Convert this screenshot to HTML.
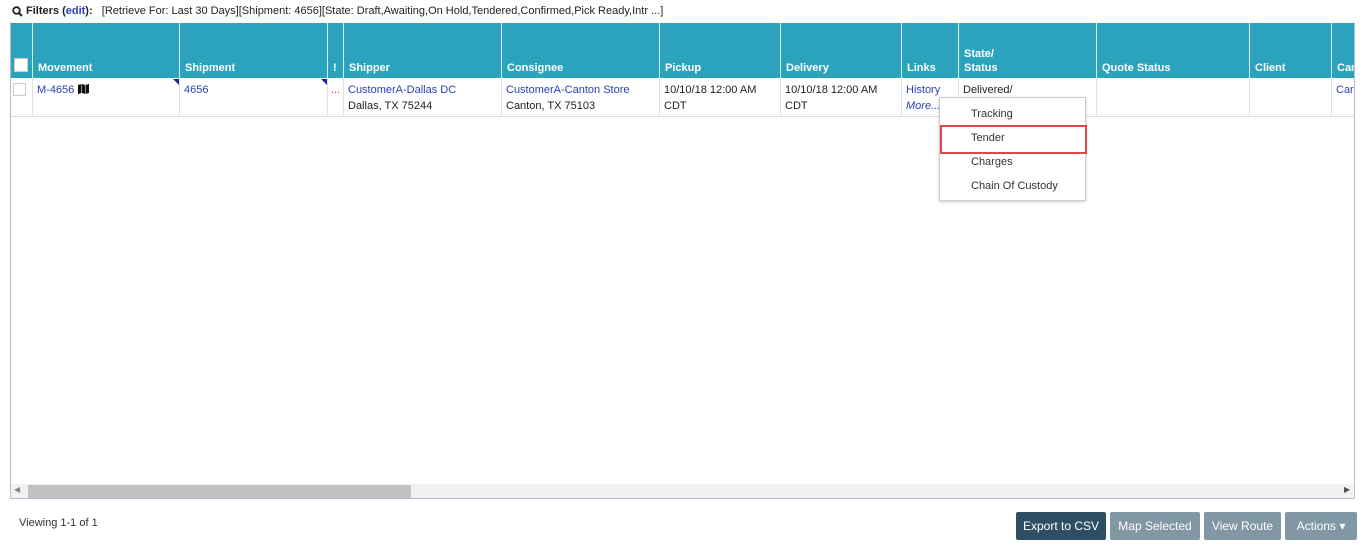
<!DOCTYPE html>
<html><head><meta charset="utf-8"><style>
body{margin:0;width:1366px;height:546px;background:#fff;font-family:"Liberation Sans",sans-serif;font-size:11px;color:#222;position:relative;overflow:hidden}
.a{position:absolute;white-space:nowrap}
.h{position:absolute;top:23px;height:55px;background:#2ca3bd;border-left:1px solid #d9eef3}
.ht{position:absolute;bottom:3px;left:5px;color:#fff;font-weight:bold;font-size:11px;line-height:14px}
.c{position:absolute;top:78px;height:38px;border-left:1px solid #e2e2e2;border-bottom:1px solid #ddd}
.ct{position:absolute;top:4px;left:4px;line-height:16px;white-space:nowrap}
.lk{color:#2a3fb8}
.btn{position:absolute;top:512px;height:28px;color:#fff;font-size:12px;line-height:28px;text-align:center;border-radius:2px;background:#8197a4}
.mi{position:absolute;left:31px;font-size:11px;color:#333}
</style></head><body>
<svg class="a" style="left:12px;top:6px" width="11" height="11" viewBox="0 0 11 11"><circle cx="4.5" cy="4.5" r="3.3" fill="none" stroke="#222" stroke-width="1.8"/><path d="M7 7L10 10" stroke="#222" stroke-width="2"/></svg>
<div class="a" style="left:26px;top:5px;font-size:11px"><b>Filters (<span class="lk">edit</span>):</b>&nbsp;&nbsp; [Retrieve For: Last 30 Days][Shipment: 4656][State: Draft,Awaiting,On Hold,Tendered,Confirmed,Pick Ready,Intr ...]</div>
<div class="a" style="left:10px;top:22px;width:1343px;height:476px;border:1px solid #b8b8d0;border-top:none"></div>
<div class="h" style="left:11px;width:21px;border-left:none"><div style="position:absolute;left:3px;bottom:6px;width:12px;height:12px;background:#fff;border:1px solid #ccc"></div></div>
<div class="h" style="left:32px;width:147px"><div class="ht">Movement</div></div>
<div class="h" style="left:179px;width:148px"><div class="ht">Shipment</div></div>
<div class="h" style="left:327px;width:16px"><div class="ht">!</div></div>
<div class="h" style="left:343px;width:158px"><div class="ht">Shipper</div></div>
<div class="h" style="left:501px;width:158px"><div class="ht">Consignee</div></div>
<div class="h" style="left:659px;width:121px"><div class="ht">Pickup</div></div>
<div class="h" style="left:780px;width:121px"><div class="ht">Delivery</div></div>
<div class="h" style="left:901px;width:57px"><div class="ht">Links</div></div>
<div class="h" style="left:958px;width:138px"><div class="ht">State/<br>Status</div></div>
<div class="h" style="left:1096px;width:153px"><div class="ht">Quote Status</div></div>
<div class="h" style="left:1249px;width:82px"><div class="ht">Client</div></div>
<div class="h" style="left:1331px;width:22px;overflow:hidden"><div class="ht">Car</div></div>

<div class="c" style="left:11px;width:21px;border-left:none"><div style="position:absolute;left:2px;top:5px;width:11px;height:11px;border:1px solid #ccc"></div></div>
<div class="c" style="left:32px;width:147px"><div class="ct"><span class="lk">M-4656</span></div><svg style="position:absolute;left:45px;top:6px" width="11" height="10" viewBox="0 0 11 10"><path d="M0 1L3.5 0V9L0 10ZM4 0L7 1V10L4 9ZM7.5 1L11 0V9L7.5 10Z" fill="#111"/></svg><div style="position:absolute;right:1px;top:1px;border-top:6px solid #1a2a9a;border-left:6px solid transparent"></div></div>
<div class="c" style="left:179px;width:148px"><div class="ct lk">4656</div><div style="position:absolute;right:1px;top:1px;border-top:6px solid #1a2a9a;border-left:6px solid transparent"></div></div>
<div class="c" style="left:327px;width:16px"><div class="ct" style="color:#d33;left:3px">...</div></div>
<div class="c" style="left:343px;width:158px"><div class="ct"><span class="lk">CustomerA-Dallas DC</span><br>Dallas, TX 75244</div></div>
<div class="c" style="left:501px;width:158px"><div class="ct"><span class="lk">CustomerA-Canton Store</span><br>Canton, TX 75103</div></div>
<div class="c" style="left:659px;width:121px"><div class="ct">10/10/18 12:00 AM<br>CDT</div></div>
<div class="c" style="left:780px;width:121px"><div class="ct">10/10/18 12:00 AM<br>CDT</div></div>
<div class="c" style="left:901px;width:57px"><div class="ct"><span class="lk">History</span><br><i class="lk">More...</i></div></div>
<div class="c" style="left:958px;width:138px"><div class="ct">Delivered/</div></div>
<div class="c" style="left:1096px;width:153px"></div>
<div class="c" style="left:1249px;width:82px"></div>
<div class="c" style="left:1331px;width:22px;overflow:hidden"><div class="ct lk">Car</div></div>

<div class="a" style="left:939px;top:97px;width:145px;height:102px;background:#fff;border:1px solid #ccc;box-shadow:0 1px 3px rgba(0,0,0,.2)">
<div class="mi" style="top:10px">Tracking</div>
<div style="position:absolute;left:0;top:27px;width:147px;height:29px;border:2px solid #e04848;box-sizing:border-box"></div>
<div class="mi" style="top:34px">Tender</div>
<div class="mi" style="top:58px">Charges</div>
<div class="mi" style="top:82px">Chain Of Custody</div>
</div>

<div class="a" style="left:11px;top:484px;width:1342px;height:14px;background:#f1f1f1"></div>
<div class="a" style="left:28px;top:485px;width:383px;height:13px;background:#c1c1c1"></div>
<div class="a" style="left:14px;top:485px;font-size:8px;color:#888">&#9664;</div>
<div class="a" style="left:1344px;top:485px;font-size:8px;color:#555">&#9654;</div>

<div class="a" style="left:19px;top:517px;font-size:11px;color:#333">Viewing 1-1 of 1</div>
<div class="btn" style="left:1016px;width:90px;background:#2e4f63">Export to CSV</div>
<div class="btn" style="left:1110px;width:90px">Map Selected</div>
<div class="btn" style="left:1204px;width:77px">View Route</div>
<div class="btn" style="left:1285px;width:72px">Actions &#9662;</div>
</body></html>
